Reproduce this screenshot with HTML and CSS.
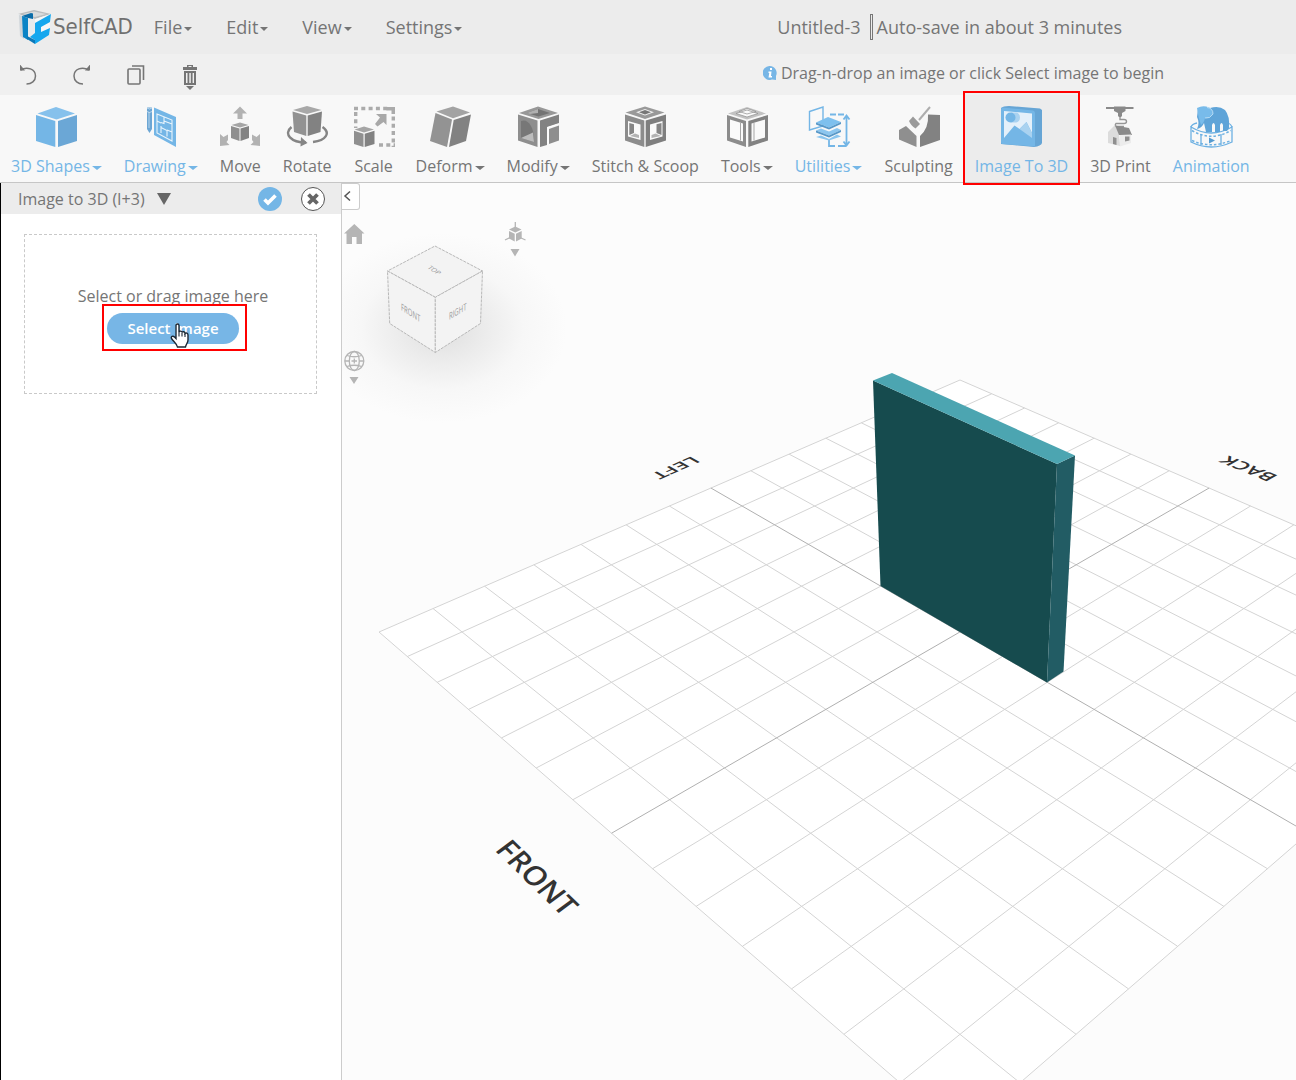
FILE: index.html
```html
<!DOCTYPE html>
<html lang="en">
<head>
<meta charset="utf-8">
<title>SelfCAD</title>
<link rel="stylesheet" href="styles.css">
</head>
<body>
<header class="topbar">
  <a class="brand" href="#">
    <svg width="36" height="36" viewBox="0 0 36 36" aria-hidden="true">
      <path d="M1 5 17 1 34 5 18 10z" fill="#b9bcbe"/>
      <path d="M6 5 17 2.500 29 5 18 8z" fill="#d9dbdc"/>
      <path d="M1 5 18 10V35L3 27z" fill="#e8ebed"/>
      <path d="M34 5 18 10V35L32 26z" fill="#f5f7f8"/>
      <path d="M2 6 7 7.500V30L3 27z" fill="#cfd4d8"/>
      <path d="M5 7 11 9V31L6 28z" fill="#0b84c6"/>
      <path d="M5 7 14 4 16 4.500 16 10 11 9z" fill="#0a6ca8"/>
      <path d="M18 14 34 5 33 13 24 18V23L33 19 32 26 18 35V31L13 28 18 24z" fill="#15a7ee"/>
      <path d="M18 31V35L10 30V27z" fill="#0b78b8"/>
    </svg>
    <span>SelfCAD</span>
  </a>
  <nav class="menu">
    <button class="caret">File</button>
    <button class="caret">Edit</button>
    <button class="caret">View</button>
    <button class="caret">Settings</button>
  </nav>
  <div class="doc">
    <span class="doc-name">Untitled-3</span>
    <i class="doc-sep"></i>
    <span class="doc-save">Auto-save in about 3 minutes</span>
  </div>
</header>

<div class="actions">
  <button aria-label="Undo"><svg width="18" height="26" viewBox="0 0 18 26" fill="none" stroke="#757575" stroke-width="1.500"><path d="M1.500 5C8 1 16.500 4 16.500 11c0 5-4 8-9 8"/><path d="M1 -.5v6h5z" fill="#757575" stroke="none"/></svg></button>
  <button aria-label="Redo"><svg width="18" height="26" viewBox="0 0 18 26" fill="none" stroke="#757575" stroke-width="1.500"><path d="M16 5C9 1 1 4 1 11c0 5 4 8 9 8"/><path d="M17 -.5v6h-5z" fill="#757575" stroke="none"/></svg></button>
  <button aria-label="Copy"><svg width="18" height="26" viewBox="0 0 18 26" fill="none" stroke="#757575" stroke-width="1.600"><rect x="1" y="4" width="12" height="15" rx="1"/><path d="M5 1h11.500v14"/></svg></button>
  <button aria-label="Delete"><svg width="18" height="26" viewBox="0 0 18 26" fill="#757575"><path d="M6 0h6v2h4v3H2V2h4zM7.500 1v1h3V1zM3 6h12v14H3zM5 8v10h1.500V8zm3.300 0v10h1.500V8zm3.300 0v10H13V8zM5 21h8L9 25z" fill-rule="evenodd"/></svg></button>
  <p class="hint">
    <svg width="14" height="14" viewBox="0 0 14 14" aria-hidden="true"><path d="M7 0a7 7 0 1 0 2 13.600l4 .4v-4A7 7 0 0 0 7 0z" fill="#77b6e6"/><path d="M7 2h2v2H7zM5.500 5.500h3L8 10h1v1.500H5.500L6.300 7H5.500z" fill="#fff"/></svg>
    Drag-n-drop an image or click Select image to begin
  </p>
</div>

<nav class="toolbar">
  <button class="tool accent">
    <svg viewBox="0 0 44 44"><path d="M22 2 41 8.500 22.500 14.500 3.500 8.500z" fill="#86c1ec"/><path d="M2 10 21.300 16V42L2 36z" fill="#74b6e6"/><path d="M24 16 43 10V36L24 42z" fill="#6ba7d6"/></svg>
    <span class="caret">3D Shapes</span>
  </button>
  <button class="tool accent">
    <svg viewBox="0 0 44 44"><path d="M8 2.500h5V24l-2.500 4L8 24z" fill="#6ca6d4"/><path d="M8 3q2.500 2 5 0M8 6.500q2.500 2 5 0M10 7v16" stroke="#d8ebf8" fill="none" stroke-width=".7"/><path d="M15 2.500 37 12V42L15 30z" fill="#74b6e6"/><path d="M18 9 33 15V36L18 28zM18 16l4 2M25 11.500v7l-3-1M25 16l8 3M22 21v7M22 22.500l6 3v6M28 25l5 2" fill="none" stroke="#e8f4fc" stroke-width="1.100"/></svg>
    <span class="caret">Drawing</span>
  </button>
  <button class="tool">
    <svg viewBox="0 0 44 44"><g fill="#b2b2b2"><path d="M22 1.500 29 8.500H24.500V14h-5V8.500H15z"/><path d="M2 41V29l3.500 3L10 29.500V35l-1.500 2 3 3z"/><path d="M42 41V29l-3.500 3L34 29.500V35l1.500 2-3 3z"/></g><path d="M22 17.500 30.500 20 22 22.500 13.500 20z" fill="#a5a5a5"/><path d="M13 21 21.500 23.500V36L13 33z" fill="#8f8f8f"/><path d="M31 21 22.500 23.500V36L31 33z" fill="#828282"/></svg>
    <span>Move</span>
  </button>
  <button class="tool">
    <svg viewBox="0 0 44 44"><path d="M22 1 36.500 5 22 9 8 5z" fill="#a8a8a8"/><path d="M7.500 6.500 21.300 10.500V31L9 27z" fill="#929292"/><path d="M37 6.500 22.700 10.500V31L35.500 27z" fill="#828282"/><path d="M6.500 22C-2 29 6 37.500 21 37.500M28 37C41 35.500 46 28 37.500 22" fill="none" stroke="#858585" stroke-width="2.400"/><path d="M16 32 22.500 38 15.500 41.500z" fill="#858585"/></svg>
    <span>Rotate</span>
  </button>
  <button class="tool">
    <svg viewBox="0 0 44 44"><path d="M2 3.500H36M3.700 7v16M27 40H43" stroke="#ababab" stroke-width="3.400" stroke-dasharray="4 3.300" fill="none"/><path d="M34.500 2H43V9H39.500V5.500H34.500z" fill="#ababab"/><path d="M41.300 11.500V42" stroke="#ababab" stroke-width="3.400" stroke-dasharray="4 3.300"/><path d="M24 9H34.500V20l-3-3-6 4.500-2.500-2.500 5-6.500z" fill="#a8a8a8"/><path d="M12 21.500 22 24.500 12 27.500 2.500 24.500z" fill="#a5a5a5"/><path d="M2 25.700 11.500 28.700V42L2 39z" fill="#8f8f8f"/><path d="M22.500 25.700 12.700 28.700V42L22.500 39z" fill="#828282"/></svg>
    <span>Scale</span>
  </button>
  <button class="tool">
    <svg viewBox="0 0 44 44"><path d="M25 1.500 42 7.500 25 13.300 8.500 6.500z" fill="#a3a3a3"/><path d="M7.500 8 24 14.500 19 42 2 36z" fill="#939393"/><path d="M43 9.500 25.700 15 21 42 38 36z" fill="#828282"/></svg>
    <span class="caret">Deform</span>
  </button>
  <button class="tool">
    <svg viewBox="0 0 44 44"><path d="M22 1.500 42 8 22.500 14 3 8z" fill="#989898"/><path d="M22 4 34 8 22.500 11.500 11 8z" fill="#737373"/><path d="M22 4V8L14 9 11 8z" fill="#b0b0b0"/><path d="M2 9.500 21.500 15.500V42L2 35.500z" fill="#8e8e8e"/><path d="M5 16C12 13 17.500 22 18 33V37L5 33z" fill="#777"/><path d="M5 33 17 27.500 18 37z" fill="#bcbcbc"/><path d="M43 9.500 24 15.500V42L31 40V22L43 18z" fill="#828282"/><path d="M33 24 43 20.500V35.500L33 39z" fill="#8e8e8e"/><path d="M32 22.500 40 20M32 22.500V38" stroke="#fff" fill="none"/></svg>
    <span class="caret">Modify</span>
  </button>
  <button class="tool">
    <svg viewBox="0 0 44 44"><path d="M22 1.500 41.500 7.500 22 14 2.500 7.500z" fill="#999"/><path d="M22 4 31 7.300 22 10.500 13 7.300z" fill="#eee"/><path d="M22 5 28 7.300 22 9.500 16 7.300z" fill="#777"/><path d="M2 9.500 21.300 15.500V42L2 35.500z" fill="#8c8c8c"/><path d="M43 9.500 22.700 15.500V42L43 35.500z" fill="#7f7f7f"/><path d="M5 16 17.500 19.500V35L5 31.500z" fill="#fafafa"/><path d="M39.500 16 27 19.500V35L39.500 31.500z" fill="#fafafa"/><path d="M6.300 18 11 19.300V28L6.300 30z" fill="#858585"/><path d="M7 31 12 28.500 16 30V33z" fill="#b3b3b3"/><path d="M38.500 18 33.500 19.300V28L38.500 30z" fill="#858585"/><path d="M38 31 32.500 28.500 28.500 30V33z" fill="#b3b3b3"/></svg>
    <span>Stitch &amp; Scoop</span>
  </button>
  <button class="tool">
    <svg viewBox="0 0 44 44"><path d="M22 2 41 8.500 22 14.500 3 8.500z" fill="#c2c2c2"/><path d="M22 5 33 8.500 22 12 11 8.500zM14 6.500 22 3.500 31 6.500 22 9z" fill="#fafafa" stroke="#8e8e8e" stroke-width=".7"/><path d="M2 10 21 16V42L2 35.500z" fill="#8c8c8c"/><path d="M43 10 23.300 16V42L43 35.500z" fill="#828282"/><path d="M5 14.500 18 18.500V36.500L5 32.500z" fill="#fafafa"/><path d="M40 14.500 26.500 18.500V36.500L40 32.500z" fill="#fafafa"/><path d="M15.500 17.800V35.500M29 17.800V35.500" stroke="#a5a5a5"/></svg>
    <span class="caret">Tools</span>
  </button>
  <button class="tool accent">
    <svg viewBox="0 0 44 44" fill="none" stroke="#74b6e6" stroke-width="1.400"><path d="M2.500 6.500 16 2V21L2.500 25z"/><path d="M23 9.500h6M31 9.500h6M22 35v6h6M31 41h8" stroke-width="1.800"/><path d="M39.500 11.500V39.500M36.500 14.500l3-4 3 4M36.500 36.500l3 4 3-4" stroke-width="1.800"/><g stroke="none"><path d="M21 12 34 17 22 22.500 9 17.500z" fill="#7ec0ee"/><path d="M9 17.500 22 22.500 34 17V19L22 24.500 9 19.500z" fill="#5898c8"/><path d="M9 25.500 14 23.500 22 26.500 30 23 34 25 22 30.500z" fill="#8cc6ef"/><path d="M9 25.500 22 30.500 34 25V27L22 32.500 9 27.500z" fill="#5898c8"/><path d="M9 32 14 30.500 22 34 30 29.500 34 31.500 22 35.500z" fill="#8cc6ef"/></g></svg>
    <span class="caret">Utilities</span>
  </button>
  <button class="tool">
    <svg viewBox="0 0 44 44"><path d="M33 2 22 15" stroke="#aeaeae" stroke-width="2"/><path d="M12 16 16 11.500 23 19 18.500 23.500Q14 21 12 16z" fill="#9a9a9a"/><path d="M2 25 9 21 19.500 31V42L2 34.500z" fill="#8f8f8f"/><path d="M43 10 31 9.500Q32 23 23 31V42L43 35z" fill="#828282"/></svg>
    <span>Sculpting</span>
  </button>
  <button class="tool accent selected">
    <svg viewBox="0 0 44 44"><path d="M2 3Q4 1 10 1L41 3.500 43 5V38Q42 41 35 42L2 39z" fill="#66a5d5"/><path d="M3 2.500 34 5.500Q36 6 36 8V41.500L3 39Q2 39 2 37V4z" fill="#74b6e6"/><path d="M5 6 33 8.500V28L27.500 17 20.500 24 15.500 20.500 5 33z" fill="#e4f0fa"/><path d="M20.500 24 27.500 17 33 28V33z" fill="#a9d2f0"/><path d="M12 7.500h5a4 5 0 0 1 0 10h-5z" fill="#a9d2f0"/><circle cx="11.500" cy="12.500" r="5" fill="#74b6e6"/></svg>
    <span>Image To 3D</span>
  </button>
  <button class="tool">
    <svg viewBox="0 0 44 44"><path d="M8 3H35.500" stroke="#8a8a8a" stroke-width="2"/><path d="M16 1.500H27.500V6L24 8V11L22 13 20 11V8L16 6z" fill="#8a8a8a"/><path d="M22 12.500v2H26a2.500 2 0 0 1 0 4H18a2 2 0 0 0 0 3h8" fill="none" stroke="#969696" stroke-width="1.400"/><path d="M10 27 17 20 21 29 22 41 10 38z" fill="#dcdcdc"/><path d="M17 20.500 31 23 34 30 21 30z" fill="#8a8a8a"/><path d="M22 30 33 29.500V38L22 41.500z" fill="#ececec"/><path d="M27 31.500h4.500v4l-4.500 1zM15 32l3.500 1v7l-3.500-1z" fill="#8f8f8f"/></svg>
    <span>3D Print</span>
  </button>
  <button class="tool accent">
    <svg viewBox="0 0 44 44"><path d="M2 22Q22 34 43 22V37Q22 47 2 37z" fill="none" stroke="#6cb0e2" stroke-width="1.300"/><path d="M3 25.500Q22 37 42 25.500M3 35.500Q22 44 42 35.500" stroke="#6cb0e2" stroke-width="1.500" stroke-dasharray="2.500 2" fill="none"/><path d="M12 29v11M32 29v11M2 22q1-3 6-4M43 22q-1-3-4-4" stroke="#6cb0e2" stroke-width="1.300" fill="none"/><path d="M20 32.500 26 35.500 20 38.500z" fill="#559bd0"/><path d="M9 4Q14 1 21 3 30 0 36 5 41 11 40 23L38 26H34V20q-1.500-4-3 0V27H26V20q-1.500-4-3 0V27H17L15 18Q13 23 8 24 11 18 8 12z" fill="#5fa4d8"/><path d="M8 3Q14 0 20 2.500 24 4 24 9 21 14 16 13 15 18 12 20 9 12 8 3z" fill="#78bbea"/><path d="M18 2.500Q24 3 24 9 21 14 16 13" stroke="#c9e4f7" stroke-width=".8" fill="none"/></svg>
    <span>Animation</span>
  </button>
</nav>

<main class="workspace">
  <aside class="panel">
    <div class="panel-head">
      <h2>Image to 3D (I+3)</h2>
      <i class="tri"></i>
      <button class="round ok" aria-label="Apply"><svg width="24" height="24" viewBox="0 0 24 24"><path d="M6.500 12.500 10 16 17.500 8.500" fill="none" stroke="#fff" stroke-width="3.600"/></svg></button>
      <button class="round close" aria-label="Close"><svg width="22" height="22" viewBox="0 0 22 22"><path d="M6.500 6.500 15.500 15.500M15.500 6.500 6.500 15.500" stroke="#666" stroke-width="3.800"/></svg></button>
    </div>
    <div class="drop">
      <p>Select or drag image here</p>
      <button class="select">Select image
        <svg class="pointer" width="20" height="26" viewBox="0 0 20 26" aria-hidden="true"><path d="M6 2.500C6 .5 9 .5 9 2.500V9C9.500 7.500 12 8 12 9.500 12.500 8.300 15 8.500 15 10.500 16 9.500 18 10 18 12V17C18 20 16 21 15.500 24H7.500C7 21 4 19 1.500 15.500.5 13.500 3 12.500 4.500 14L6 15.500z" fill="#fff" stroke="#1c2733" stroke-width="1.400"/><path d="M9 9v4.500M12 10v3.500M15 11v3" stroke="#1c2733" stroke-width="1.100"/></svg>
      </button>
    </div>
  </aside>

  <section class="viewport">
    <svg class="scene" viewBox="342 183 954 897" preserveAspectRatio="xMidYMid slice" aria-label="3D view">
      <defs>
        <radialGradient id="shade" cx=".5" cy=".5" r=".5">
          <stop offset="0" stop-color="#dedede"/><stop offset=".35" stop-color="#ececec"/><stop offset=".65" stop-color="#f7f7f7"/><stop offset="1" stop-color="#fcfcfc"/>
        </radialGradient>
        <path id="fan" d="M960 380 1541 632M928.300 393.800 1512.600 656.500M895.400 408 1482.800 682.300M861.300 422.800 1451.500 709.400M825.800 438.200 1418.500 737.900M789 454.100 1383.800 768M750.700 470.700 1347.100 799.700M669.400 506 1267.400 868.700M626.100 524.800 1223.900 906.400M581 544.400 1177.700 946.400M533.900 564.800 1128.500 988.900M484.600 586.200 1076.100 1034.300M433 608.500 1020 1082.800M379 632 960 1134.700"/>
        <path id="axis" d="M710.900 488 1308.400 833.200"/>
      </defs>
      <path d="M960 380 1541 632 960 1134.700 379 632z" fill="#fff"/>
      <g fill="none" stroke="#d4d4d4">
        <use href="#fan"/><use href="#fan" transform="matrix(-1 0 0 1 1920 0)"/>
      </g>
      <g fill="none" stroke="#b0b0b0">
        <use href="#axis"/><use href="#axis" transform="matrix(-1 0 0 1 1920 0)"/>
      </g>
      <g class="ground">
        <text transform="matrix(1.050 1.020 -1.170 .870 494 850)">FRONT</text>
        <text transform="matrix(-.950 .420 -.660 -.360 692 456)">LEFT</text>
        <text transform="matrix(-.970 -.400 .750 -.420 1279 476)">BACK</text>
      </g>
      <path d="M873 380.500 1057 464 1047 682.500 880.500 586z" fill="#164b4e"/>
      <path d="M1057 464 1075 455.500 1063.500 671.500 1047 682.500z" fill="#225c64"/>
      <path d="M873 380.500 892 373 1075 455.500 1057 464z" fill="#4ca5b1"/>

      <ellipse cx="442" cy="328" rx="125" ry="95" fill="url(#shade)"/>
      <g fill="#f3f3f3" stroke="#b8b8b8" stroke-dasharray="3 1">
        <path d="M435 246 482.500 271 435.300 297.300 387.500 271z"/>
        <path d="M387.500 271 435.300 297.300V352.500L389.700 323.500z"/>
        <path d="M482.500 271 435.300 297.300V352.500L480.500 323.500z"/>
      </g>
      <g class="faces">
        <text transform="matrix(.700 .450 -.700 .450 427 268)">TOP</text>
        <text transform="matrix(.750 .480 0 1.200 401 310)">FRONT</text>
        <text transform="matrix(.750 -.450 0 1.200 449 320)">RIGHT</text>
      </g>

      <g fill="#b5b5b5">
        <path d="M354.300 224 364.500 233.500H362V244H356.500V237H352V244H346.500V233.500H344z"/>
        <path d="M510.500 249H519.500L515 256.500zM349.500 377H358.500L354 384z"/>
        <path d="M515.300 222V229M505 240 510 237.500M520 237.500 525.500 240" stroke="#b5b5b5" stroke-width="1.300"/>
        <path d="M515.300 226.500 521.500 229.500 515.300 232.500 509 229.500zM509 231 514.700 233.700V241.500L509 238.500zM521.700 231 516 233.700V241.500L521.700 238.500z"/>
      </g>
      <g fill="none" stroke="#b5b5b5" stroke-width="1.300">
        <circle cx="354.300" cy="361" r="9.500"/><ellipse cx="354.300" cy="361" rx="5" ry="9.500"/><path d="M347 355.500Q354.300 358 361.500 355.500M347 366.500Q354.300 364 361.500 366.500M345 361H349M359.500 361H363.500M351.500 361H357M354.300 358.500V363.500"/>
      </g>
    </svg>
    <button class="collapse" aria-label="Collapse panel"><svg width="10" height="14" viewBox="0 0 10 14"><path d="M8 1.500 3 6 8 10.500" fill="none" stroke="#555" stroke-width="1.500"/></svg></button>
  </section>
</main>
</body>
</html>
```
FILE: styles.css
```css
* { box-sizing: border-box; }
body {
  margin: 0;
  min-height: 100vh;
  display: flex;
  flex-direction: column;
  font-family: "Open Sans", "Noto Sans", sans-serif;
  font-size: 16px;
  line-height: 24px;
  color: #757575;
  background: #fcfcfc;
  overflow: hidden;
}
button {
  margin: 0;
  padding: 0;
  border: 0;
  background: none;
  color: inherit;
  font: inherit;
  cursor: pointer;
}
svg { display: block; }
p, h2 { margin: 0; }

.topbar {
  display: flex;
  align-items: center;
  height: 54px;
  padding: 0 174px 0 17px;
  background: #ececec;
  font-size: 18px;
}
.brand {
  display: flex;
  align-items: center;
  color: #707070;
  font-family: "DejaVu Sans Condensed", "Open Sans", sans-serif;
  font-size: 22px;
  text-decoration: none;
}
.menu { display: flex; gap: 34px; margin-left: 21px; }
.caret::after {
  content: "";
  display: inline-block;
  margin-left: 2px;
  vertical-align: 2px;
  border: 4px solid transparent;
  border-width: 4px 4px 0;
  border-top-color: currentColor;
}
.menu .caret::after { vertical-align: 3px; }
.tool .caret::after { border-width: 4px 5px 0; }
.doc { display: flex; align-items: center; margin-left: auto; white-space: nowrap; }
.doc-sep { width: 3px; height: 26px; margin: 0 4px 0 9px; border: 1px solid #777; }

.actions {
  display: flex;
  align-items: center;
  gap: 36px;
  height: 41px;
  padding: 0 132px 0 19px;
  background: #f0f0f0;
}
.actions button { padding-top: 7px; }
.hint { display: flex; align-items: center; gap: 4px; margin: 0 0 4px auto; white-space: nowrap; }

.toolbar {
  display: flex;
  height: 88px;
  background: #f8f8f8;
  border-bottom: 1px solid #c6c6c6;
}
.tool {
  position: relative;
  display: flex;
  flex-direction: column;
  align-items: center;
  gap: 5px;
  padding: 10px 11px 0;
  white-space: nowrap;
}
.tool svg { width: 44px; height: 44px; margin: 0 -2px; }
.accent { color: #74b6e6; }
.selected { background: #ececec; }
.selected::after {
  content: "";
  position: absolute;
  inset: -4px -1px -3px -1px;
  border: 2px solid #f00;
}

.workspace { display: flex; flex: 1; }
.panel {
  width: 342px;
  border-left: 1px solid #000;
  border-right: 1px solid #ccc;
  background: #fff;
}
.panel-head {
  display: flex;
  align-items: center;
  height: 31px;
  padding: 0 16px 0 17px;
  background: #ececec;
}
.panel-head h2 { font-size: 16px; font-weight: 400; }
.tri {
  margin-left: 12px;
  border: 7px solid transparent;
  border-top: 12px solid #666;
  border-bottom: 0;
}
.round { width: 24px; height: 24px; border-radius: 50%; }
.ok { margin-left: auto; background: #74b6e6; }
.close { margin-left: 19px; border: 1px solid #555; background: #fff; }

.drop {
  display: flex;
  flex-direction: column;
  align-items: center;
  gap: 5px;
  height: 160px;
  margin: 20px 24px 0 23px;
  padding: 49px 0 0 5px;
  border: 1px dashed #c9c9c9;
}
.select {
  position: relative;
  height: 31px;
  padding: 0 20px 2px;
  border-radius: 16px;
  background: #77b6e6;
  color: #fff;
  font-size: 15px;
  font-weight: 600;
}
.select::after {
  content: "";
  position: absolute;
  inset: -9px -8px -7px -5px;
  border: 2px solid #f00;
}
.pointer { position: absolute; left: 63px; top: 10px; z-index: 1; }

.viewport { position: relative; flex: 1; overflow: hidden; }
.scene { position: absolute; inset: 0; width: 100%; height: 100%; }
.collapse {
  position: relative;
  display: flex;
  align-items: center;
  width: 18px;
  height: 27px;
  border: 1px solid #ccc;
  border-left: 0;
  border-radius: 0 3px 3px 0;
  background: #fff;
}
.ground { font-size: 20px; font-weight: 600; fill: #333; }
.faces { font-size: 8px; fill: #999; }
```
